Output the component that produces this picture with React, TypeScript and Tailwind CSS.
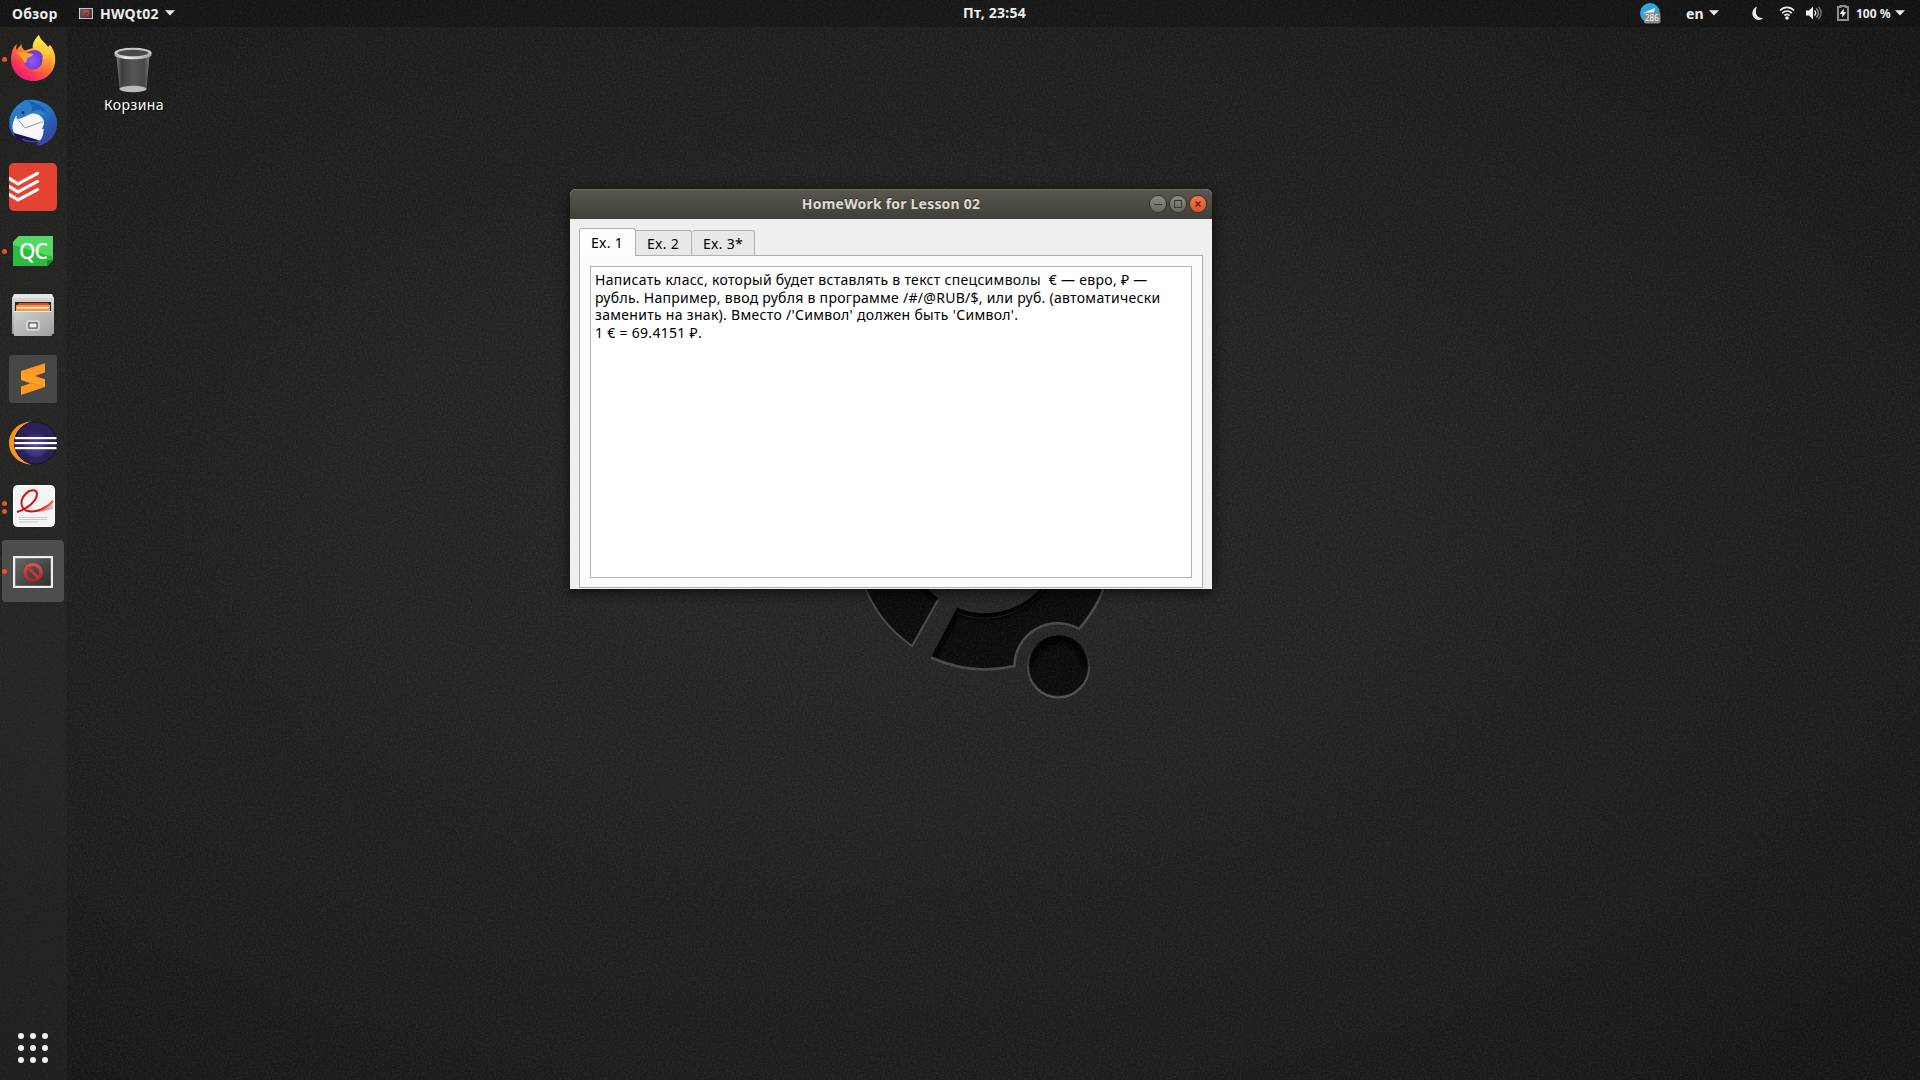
import React from "react";

function Noise() {
  return (
    <svg className="pointer-events-none absolute inset-0 h-full w-full opacity-[0.05]">
      <filter id="grain" x="0" y="0" width="100%" height="100%" colorInterpolationFilters="sRGB">
        <feTurbulence type="fractalNoise" baseFrequency="0.55" numOctaves="2" seed="4" />
        <feColorMatrix values="2 0 0 0 -0.7  2 0 0 0 -0.7  2 0 0 0 -0.7  0 0 0 0 1" />
      </filter>
      <rect width="100%" height="100%" filter="url(#grain)" />
    </svg>
  );
}

function WallpaperLogo() {
  const right =
    "M957 608 A75 75 0 0 0 1056 562 L1113 562 A131 131 0 0 1 1079 629 A43 43 0 0 0 1014.5 666 A131 131 0 0 1 931 657.500 Z";
  const left = "M938 598.500 A75 75 0 0 1 912 560 L856 560 A131 131 0 0 0 912 646 Z";
  return (
    <svg className="absolute left-[840px] top-[560px]" width="300" height="150" viewBox="840 560 300 150">
      <defs>
        <filter id="soft"><feGaussianBlur stdDeviation="2.5" /></filter>
        <clipPath id="cr"><path d={right} /></clipPath>
        <clipPath id="cl"><path d={left} /></clipPath>
        <clipPath id="cc"><circle cx="1058.500" cy="665.500" r="30" /></clipPath>
        <linearGradient id="rim" x1="0" y1="0" x2="0" y2="1">
          <stop offset="0.1" stopColor="#555" stopOpacity="0" />
          <stop offset="0.55" stopColor="#555" stopOpacity="0.7" />
          <stop offset="1" stopColor="#585858" />
        </linearGradient>
      </defs>
      <path d={left} fill="#0c0c0c" />
      <path d={right} fill="#0c0c0c" />
      <circle cx="1058.500" cy="665.500" r="30" fill="#0c0c0c" />
      <g clipPath="url(#cr)">
        <path d="M931 657 L957 609 A75 75 0 0 0 1056 562" fill="none" stroke="#000" strokeWidth="12" filter="url(#soft)" />
      </g>
      <g clipPath="url(#cl)">
        <path d="M938 599 A75 75 0 0 1 912 560" fill="none" stroke="#000" strokeWidth="10" filter="url(#soft)" />
      </g>
      <g clipPath="url(#cc)">
        <path d="M1028 668 A30 30 0 0 1 1089 668" fill="none" stroke="#000" strokeWidth="14" filter="url(#soft)" />
      </g>
      <g fill="none" stroke="#4c4c4c" strokeWidth="2">
        <path d="M863 582 A131 131 0 0 0 912 646 L938 600" />
        <path d="M1106 582 A131 131 0 0 1 1079 629 A43 43 0 0 0 1014.5 666 A131 131 0 0 1 931 657.500" strokeWidth="2.500" />
      </g>
      <path d="M957 609 A75 75 0 0 0 1056 562" fill="none" stroke="#1a1a1a" strokeWidth="1" transform="translate(0 4)" />
      <circle cx="1058.500" cy="667" r="30.500" fill="none" stroke="url(#rim)" strokeWidth="2.200" />
    </svg>
  );
}

function Firefox() {
  return (
    <svg width="48" height="48" viewBox="0 0 48 48">
      <defs>
        <linearGradient id="ffBody" x1="0.85" y1="0.1" x2="0.25" y2="1">
          <stop offset="0" stopColor="#fff44f" />
          <stop offset="0.3" stopColor="#ffb52b" />
          <stop offset="0.55" stopColor="#ff6a36" />
          <stop offset="0.8" stopColor="#f9305a" />
          <stop offset="1" stopColor="#e31587" />
        </linearGradient>
        <radialGradient id="ffGlobe" cx="0.45" cy="0.55" r="0.6">
          <stop offset="0" stopColor="#9059ff" />
          <stop offset="0.7" stopColor="#7542e5" />
          <stop offset="1" stopColor="#5b2ac0" />
        </radialGradient>
        <linearGradient id="ffTail" x1="0" y1="0" x2="0" y2="1">
          <stop offset="0" stopColor="#fff44f" />
          <stop offset="0.5" stopColor="#ffc636" />
          <stop offset="1" stopColor="#ff5a3d" />
        </linearGradient>
      </defs>
      <path d="M8 9 C7 12 7 13 7.500 15 L12.500 9 C12.500 12 13.500 14 16 15.500 L24 13 C24 7 27 3 30 0 C31 5 36 7 39 12 L41 10 C45 15 47 21 46 28 C44.500 39 35 46 24.500 46 C12 46 2.500 37 2 25 C1.900 18 4 12 8 9Z" fill="url(#ffBody)" />
      <path d="M30 0 C31 6 38 8 40 15 L41.500 10.500 C46.500 18 45 29 39 34 C34 38 28 38 24 36 C33 34 36 26 32.500 19 C31 15 26 14 23.500 12.500 C23.500 7 27 3 30 0Z" fill="url(#ffTail)" opacity="0.85" />
      <circle cx="24" cy="25" r="9.500" fill="url(#ffGlobe)" />
      <path d="M24 15.500 C29 14 34 18 34 23 C32 20 28 20 27 23 C27 19 26 17 24 15.500Z" fill="#7a3fd8" />
      <path d="M7.500 18 C12 16 17 18 24 19 C24 22 19 22 18 24 C17 26 19 27 15.500 28 C14.500 24 11 21 7.500 18Z" fill="#ffa42e" />
    </svg>
  );
}

function Thunderbird() {
  return (
    <svg width="48" height="48" viewBox="0 0 48 48">
      <defs>
        <linearGradient id="tb" x1="0.3" y1="0" x2="0.7" y2="1">
          <stop offset="0" stopColor="#2c86d8" />
          <stop offset="0.5" stopColor="#1f66bd" />
          <stop offset="1" stopColor="#3a43a6" />
        </linearGradient>
        <linearGradient id="tbWing" x1="0" y1="0" x2="0.4" y2="1">
          <stop offset="0" stopColor="#3096d8" />
          <stop offset="0.5" stopColor="#2460b4" />
          <stop offset="1" stopColor="#3443a0" />
        </linearGradient>
      </defs>
      <path d="M17 1 C34 -1 48 9 48 24 C48 36 41 44 29 47 L28 43 C15 44 4 40 1 30 C-2 18 4 9 13 3 L17 .5Z" fill="url(#tb)" />
      <path d="M4 32 L6 37 C8 41 12 43 15 43 L13 39 C18 42 24 43 30 41Z" fill="#20124d" />
      <path d="M7 17 C4 22 2 28 5 34 L31 41.500 C35 37 34 33 35 29 L33 30 C35 26 36 23 35.500 19 L36 16 C28 14 18 14 7 17Z" fill="#f7f7f9" />
      <path d="M7 18 L16 29 L34 22.500" fill="none" stroke="#868c98" strokeWidth="0.900" />
      <path d="M24 14 C30 9 38 9 44 12 C49 21 48 31 43 38 L42 34 L38 43 L37 37 L33 44 L27 47 C35 42 34 34 38 29 L33 30 C38 23 34 16 24 14Z" fill="url(#tbWing)" />
      <path d="M8 19 C7 10 13 5 17 1 C27 3 35 7 38 14 C28 9 19 17 10 20Z" fill="#2a7cc8" />
      <path d="M17 1 C29 4 36 8 39 15 C33 10 27 10 22 13 C25 8 22 4 17 1Z" fill="#1d5fb0" />
      <circle cx="14" cy="13.500" r="1.500" fill="#17284d" />
    </svg>
  );
}

function Todoist() {
  return (
    <svg width="48" height="48" viewBox="0 0 48 48">
      <rect width="48" height="48" rx="5" fill="#e44332" />
      <g fill="none" stroke="#fff" strokeWidth="3.200" strokeLinecap="round" strokeLinejoin="round">
        <path d="M0 15.500 L9 20.800 L28.500 10.300" />
        <path d="M0 23.500 L9 28.800 L28.500 18.300" />
        <path d="M0 31.500 L9 36.800 L28.500 26.600" />
      </g>
    </svg>
  );
}

function QtCreator() {
  return (
    <div className="relative h-[30px] w-[40px]">
      <svg width="40" height="30" viewBox="0 0 40 30">
        <path d="M6 0H40V24L34 30H0V6Z" fill="#41cd52" />
        <path d="M6 0H40V21L0 9V6Z" fill="#53d765" />
        <path d="M0 9L40 21V24L34 30H0Z" fill="#2dbb40" />
        <path d="M40 24L34 30V24Z" fill="#188a2b" />
      </svg>
      <span className="absolute inset-0 text-center text-[21px] font-medium leading-[30px] tracking-[-1px] text-white">QC</span>
    </div>
  );
}

function Files() {
  return (
    <svg width="42" height="44" viewBox="0 0 42 44">
      <defs>
        <linearGradient id="fa" x1="0" y1="0" x2="0" y2="1">
          <stop offset="0" stopColor="#dcdcdc" /><stop offset="1" stopColor="#9e9e9e" />
        </linearGradient>
        <linearGradient id="fb" x1="0" y1="0" x2="1" y2="1">
          <stop offset="0" stopColor="#cfcfcf" /><stop offset="1" stopColor="#a0a0a0" />
        </linearGradient>
      </defs>
      <path d="M2.500 1H39.500L42 5V41H0V5Z" fill="url(#fa)" />
      <path d="M2 1H40L41.500 5H.5Z" fill="#e6e6e6" />
      <rect x="3" y="9" width="36" height="12" fill="#2b2320" />
      <path d="M7 10H36L38 13H5Z" fill="#d8501f" />
      <rect x="4" y="12" width="34" height="7" fill="#ef9a45" />
      <rect x="5" y="14" width="32" height="1.500" fill="#fff0d8" />
      <rect x="2" y="18" width="38" height="25" rx="1" fill="url(#fb)" />
      <path d="M2 18.500H40" stroke="#ececec" />
      <rect x="15" y="28" width="12" height="9" rx="1.500" fill="#b5b5b5" stroke="#ddd" strokeWidth="1.500" />
      <rect x="17" y="30" width="8" height="5" fill="#f3f3f3" stroke="#4d4d4d" strokeWidth="1" />
    </svg>
  );
}

function Sublime() {
  return (
    <svg width="48" height="48" viewBox="0 0 48 48">
      <rect width="48" height="48" rx="3" fill="#464646" />
      <path d="M12 25L21 28L36 24V32L12 40V31.500L21 28.500Z" fill="#ff9820" />
      <path d="M36 8.300V17.500L26 21L21 28L12 25V16Z" fill="#ff9820" />
      <path d="M21 28.300L36 24.500V32L30 30.500Z" fill="#d9760c" />
      <path d="M12 16.500L36 24.200V32L12 24.800Z" fill="#ffa02b" />
    </svg>
  );
}

function Eclipse() {
  return (
    <svg width="48" height="44" viewBox="0 0 48 44">
      <defs>
        <radialGradient id="ec" cx="0.5" cy="0.6" r="0.5">
          <stop offset="0" stopColor="#5a4a9f" /><stop offset="0.7" stopColor="#3d3183" /><stop offset="1" stopColor="#2c2255" />
        </radialGradient>
      </defs>
      <path d="M22.500 .5 C10 1 0 10 0 22 C0 34 10 43 22.500 43.500 C12 40 5.500 32 5.500 22 C5.500 12 12 4 22.500 .5Z" fill="#f7941e" />
      <circle cx="26.500" cy="22" r="21" fill="#2c2255" stroke="#171231" strokeWidth="1" />
      <circle cx="26.500" cy="22" r="14" fill="url(#ec)" />
      <g fill="#fff">
        <rect x="6" y="16" width="41.500" height="2.200" />
        <rect x="5.500" y="21" width="42.500" height="2.200" />
        <rect x="6" y="26" width="41.500" height="2.200" />
      </g>
    </svg>
  );
}

function DocumentViewer() {
  return (
    <svg width="42" height="42" viewBox="0 0 42 42">
      <defs>
        <linearGradient id="dv" x1="0" y1="0" x2="1" y2="0">
          <stop offset="0" stopColor="#d40000" /><stop offset="1" stopColor="#f4a0a0" />
        </linearGradient>
      </defs>
      <rect x="0.500" y="0.500" width="41" height="41" rx="4" fill="#f4f4f4" stroke="#fff" />
      <path d="M6 32.500H34M6 34.500H34M6 37H25" stroke="#c9c9c9" strokeWidth="1" />
      <path d="M4 27 C14 24 24 16 24 9 C24 4 17 4 12.500 9 C7 15 7 22 13 25.500 C22 29 34 23 40 16" fill="none" stroke="#cf1212" strokeWidth="2" />
      <path d="M21 26 C30 25 35 20 40 15 V24 C34 25 28 28 21 26Z" fill="url(#dv)" opacity="0.7" />
    </svg>
  );
}

function AppFrame({ w, h }: { w: number; h: number }) {
  return (
    <svg width={w} height={h} viewBox="0 0 40 32">
      <defs>
        <linearGradient id="af" x1="0" y1="0" x2="1" y2="1">
          <stop offset="0" stopColor="#686868" /><stop offset="1" stopColor="#2c2c2c" />
        </linearGradient>
        <linearGradient id="no" x1="0" y1="0" x2="0" y2="1">
          <stop offset="0" stopColor="#e05548" /><stop offset="1" stopColor="#b81f25" />
        </linearGradient>
      </defs>
      <rect x="1" y="1" width="38" height="30" fill="url(#af)" stroke="#eee" strokeWidth="2.400" />
      <circle cx="20" cy="16.500" r="8" fill="none" stroke="url(#no)" strokeWidth="3.200" />
      <path d="M14.500 11L25.500 22" stroke="#cc3630" strokeWidth="3" />
    </svg>
  );
}

const launchers = [
  { icon: <Firefox />, dots: 1 },
  { icon: <Thunderbird />, dots: 0 },
  { icon: <Todoist />, dots: 0 },
  { icon: <QtCreator />, dots: 1 },
  { icon: <Files />, dots: 0 },
  { icon: <Sublime />, dots: 0 },
  { icon: <Eclipse />, dots: 0 },
  { icon: <div className="pb-[3px] pl-[1px]"><DocumentViewer /></div>, dots: 2 },
  { icon: <div className="pt-[2px]"><AppFrame w={40} h={32} /></div>, dots: 1, active: true },
];

function Launcher() {
  return (
    <nav className="flex w-[67px] flex-col justify-between bg-[#333330]/30">
      <div className="flex flex-col">
        {launchers.map((l, i) => (
          <div key={i} className="relative flex h-16 w-[66px] items-center justify-center">
            {l.active && <div className="absolute left-0.5 top-[1px] h-[62px] w-[62px] rounded-[4px] bg-[#4d4d4b]" />}
            <div className="absolute left-[2px] top-0 flex h-full flex-col justify-center gap-[3px]">
              {Array.from({ length: l.dots }, (_, k) => (
                <div key={k} className="h-[5px] w-[5px] rounded-full bg-[#e95420]" />
              ))}
            </div>
            <div className="relative">{l.icon}</div>
          </div>
        ))}
      </div>
      <div className="grid grid-cols-3 gap-[6px] pb-[17px] pl-[18px] pr-[19px]">
        {Array.from({ length: 9 }, (_, k) => (
          <div key={k} className="h-[6px] w-[6px] rounded-full bg-[#f0f0f0]" />
        ))}
      </div>
    </nav>
  );
}

function Caret() {
  return (
    <svg width="10" height="6" viewBox="0 0 10 6">
      <path d="M0 .3H10L5 5.500Z" fill="#eee" />
    </svg>
  );
}

function TopBar() {
  return (
    <header className="relative flex h-[27px] items-center bg-black/20 pb-px text-[14px] font-bold leading-[25px] tracking-[0.25px] text-[#eeeeec]">
      <span className="w-[67px] pl-3">Обзор</span>
      <div className="flex items-center pl-3">
        <AppFrame w={14} h={11} />
        <span className="ml-[7px] w-[60px] whitespace-nowrap">HWQt02</span>
        <div className="ml-[5px]"><Caret /></div>
      </div>
      <span className="absolute left-[963px] top-0 whitespace-nowrap">Пт, 23:54</span>
      <div className="ml-auto flex h-full items-center">
        <svg width="21" height="21" viewBox="0 0 21 21" fontFamily="Noto Sans">
          <circle cx="10" cy="10" r="10" fill="#2ca5e0" />
          <path d="M3 10L15 5L13 13Z" fill="#fff" />
          <rect x="4" y="9.500" width="16.500" height="11" rx="2" fill="#8a8a8a" />
          <text x="5" y="18" fontSize="8" fontWeight="400" letterSpacing="0" fill="#fff">286</text>
        </svg>
        <span className="ml-[25px] w-[18px]">en</span>
        <div className="ml-[5px]"><Caret /></div>
        <svg className="ml-[32px]" width="14" height="15" viewBox="0 0 14 15">
          <path d="M6 .5C1 3 0 8 3 11.500C6 15 10 14.500 12 12C6 12.500 3 7 6 .5Z" fill="#eee" />
        </svg>
        <svg className="ml-[14px]" width="16" height="14" viewBox="0 0 16 14">
          <g fill="none" stroke="#eee" strokeWidth="1.700">
            <path d="M1 4.500C5 .3 11 .3 15 4.500" />
            <path d="M3.200 7.200C6 4.400 10 4.400 12.800 7.200" />
            <path d="M5.400 9.700C7 8.200 9 8.200 10.600 9.700" />
          </g>
          <circle cx="8" cy="12" r="1.800" fill="#eee" />
        </svg>
        <svg className="ml-[11px]" width="16" height="14" viewBox="0 0 16 14">
          <path d="M0 4.500H3L7 .5V13.500L3 9.500H0Z" fill="#eee" />
          <g fill="none" strokeWidth="1.400">
            <path d="M8.500 4.500C10 6 10 8 8.500 9.500" stroke="#eee" />
            <path d="M10.300 2.500C13 5 13 9 10.300 11.500" stroke="#999" />
            <path d="M12.500 1C16 4.500 16 9.500 12.500 13" stroke="#777" />
          </g>
        </svg>
        <svg className="ml-[15px]" width="12" height="16" viewBox="0 0 12 16">
          <path d="M3.500 2V1H8.500V2H11V15H1V2Z" fill="none" stroke="#8d8d8d" strokeWidth="2" />
          <path d="M7 3.500L2.700 8.800H5.500L5 12.500L9.300 7.200H6.500Z" fill="#fff" />
        </svg>
        <span className="ml-[7px] w-[34px] whitespace-nowrap text-[12px] tracking-normal">100 %</span>
        <div className="ml-[5px] mr-[15px]"><Caret /></div>
      </div>
    </header>
  );
}

function Trash() {
  return (
    <div className="absolute left-[93px] top-[47px] flex w-[80px] flex-col items-center">
      <svg width="38" height="46" viewBox="0 0 38 46">
        <defs>
          <linearGradient id="tr" x1="0" y1="0" x2="1" y2="0">
            <stop offset="0" stopColor="#777" /><stop offset="0.15" stopColor="#3f3f3f" />
            <stop offset="0.5" stopColor="#555" /><stop offset="0.85" stopColor="#484848" /><stop offset="1" stopColor="#777" />
          </linearGradient>
          <linearGradient id="tr2" x1="0" y1="0" x2="1" y2="0">
            <stop offset="0" stopColor="#999" /><stop offset="0.3" stopColor="#f4f4f4" /><stop offset="1" stopColor="#9a9a9a" />
          </linearGradient>
        </defs>
        <path d="M2.500 9L5.500 42C10 46 28 46 32.500 42L35.500 9Z" fill="url(#tr)" />
        <ellipse cx="19" cy="42" rx="13.500" ry="3.300" fill="#b9b9b9" />
        <path d="M.5 5.500V8.500C5 13.500 33 13.500 37.500 8.500V5.500Z" fill="url(#tr2)" />
        <ellipse cx="19" cy="5.500" rx="18.500" ry="4.700" fill="#c9c9c9" />
        <ellipse cx="19" cy="6" rx="15.500" ry="3.200" fill="#4a4a4a" />
      </svg>
      <span className="mt-[2px] whitespace-nowrap pl-[2px] text-[14px] leading-[20px] tracking-[0.4px] text-white [text-shadow:1px_1px_1px_#000]">Корзина</span>
    </div>
  );
}

function WindowButtons() {
  return (
    <div className="ml-auto flex gap-1 pb-px pr-[6px]">
      <div className="flex h-4 w-4 items-center justify-center rounded-full bg-linear-to-b from-[#8c8b84] to-[#696862] ring-1 ring-[#33322e]">
        <div className="h-px w-2 bg-[#3a3935]" />
      </div>
      <div className="flex h-4 w-4 items-center justify-center rounded-full bg-linear-to-b from-[#8c8b84] to-[#696862] ring-1 ring-[#33322e]">
        <div className="h-2 w-2 border border-[#3a3935]" />
      </div>
      <div className="flex h-4 w-4 items-center justify-center rounded-full bg-linear-to-b from-[#f4784f] to-[#e2521f] ring-1 ring-[#33322e]">
        <svg width="6" height="6" viewBox="0 0 6 6"><path d="M.5 .5L5.500 5.500M5.500 .5L.5 5.500" stroke="#4a2013" strokeWidth="1.300" /></svg>
      </div>
    </div>
  );
}

function AppWindow() {
  return (
    <section className="absolute left-[570px] top-[189px] flex h-[400px] w-[642px] flex-col overflow-hidden rounded-t-[6px] bg-[#efefef] text-[14px] tracking-[0.3px] text-black shadow-[0_3px_12px_2px_rgba(0,0,0,0.55)]">
      <div className="relative flex h-[30px] shrink-0 items-center border-t border-[#6b6a62] bg-linear-to-b from-[#59574f] to-[#3f3e39]">
        <span className="absolute inset-x-0 top-0 text-center text-[14px] font-bold leading-[27px] tracking-[0.2px] text-[#dfdbd2] [text-shadow:0_-1px_0_#2b2a27]">HomeWork for Lesson 02</span>
        <WindowButtons />
      </div>
      <div className="flex flex-1 flex-col px-[9px] pb-px pt-[9px]">
        <div className="z-10 -mb-px flex items-end">
          <div className="h-7 w-[57px] rounded-t-[3px] border border-b-0 border-[#b0b0b0] bg-[#fdfdfd] pl-[11px] leading-[28px]">Ex. 1</div>
          <div className="h-[26px] w-[56px] rounded-tr-[3px] border border-l-0 border-[#b0b0b0] bg-[#e8e8e8] pl-[11px] leading-[26px]">Ex. 2</div>
          <div className="h-[26px] w-[63px] rounded-t-[3px] border border-l-0 border-[#b0b0b0] bg-[#e8e8e8] pl-[11px] leading-[26px]">Ex. 3*</div>
        </div>
        <div className="flex flex-1 border border-[#acacac] bg-[#fcfcfc] p-[10px] pb-[9px]">
          <div className="flex-1 whitespace-pre border border-[#b3b3b3] bg-white pl-1 pt-[4px] leading-[17.700px]">
            <div>Написать класс, который будет вставлять в текст спецсимволы  € — евро, ₽ —</div>
            <div className="tracking-[0.28px]">рубль. Например, ввод рубля в программе /#/@RUB/$, или руб. (автоматически</div>
            <div>заменить на знак). Вместо /'Символ' должен быть 'Символ'.</div>
            <div>1 € = 69.4151 ₽.</div>
          </div>
        </div>
      </div>
    </section>
  );
}

export default function App() {
  return (
    <div className="relative flex h-[1080px] w-[1920px] flex-col overflow-hidden bg-[radial-gradient(ellipse_at_46%_48%,#292929_0%,#262626_25%,#1f1f1f_65%,#161616_100%)] font-['Noto_Sans','Open_Sans',sans-serif]">
      <WallpaperLogo />
      <Noise />
      <TopBar />
      <div className="relative flex flex-1">
        <Launcher />
      </div>
      <Trash />
      <AppWindow />
    </div>
  );
}
